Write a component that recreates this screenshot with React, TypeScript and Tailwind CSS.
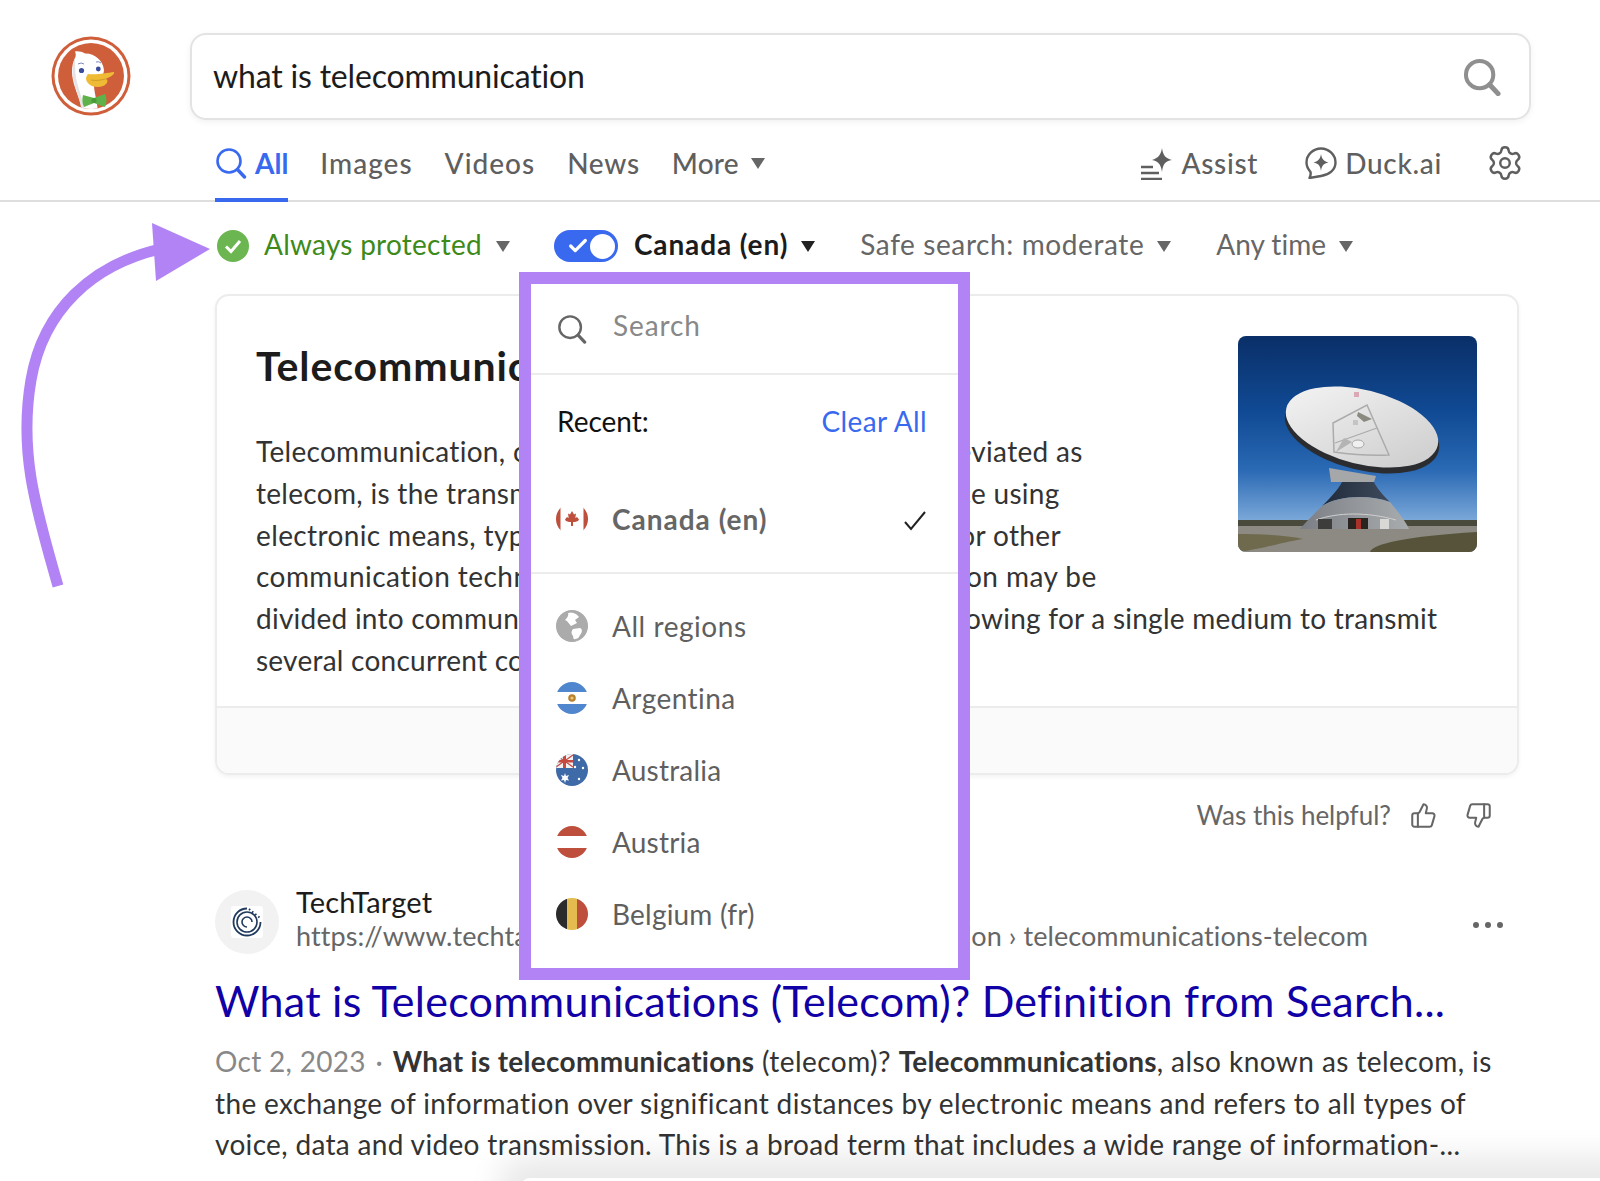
import React from "react";
import { ThumbsUp, ThumbsDown, Settings, Check } from "lucide-react";

const F = "[font-family:Lato,'Liberation_Sans',sans-serif] [font-variant-ligatures:none]";

function Caret({ dark = false, c = "" }: { dark?: boolean; c?: string }) {
  return (
    <svg width="14" height="11" viewBox="0 0 14 11" className={c}>
      <path d="M0 0H14L7 11Z" fill={dark ? "#222" : "#666"} />
    </svg>
  );
}

function Lens({ size, color, sw = 3 }: { size: number; color: string; sw?: number }) {
  return (
    <svg width={size} height={size} viewBox="0 0 32 32" fill="none" stroke={color}>
      <circle cx="14" cy="14" r="11.5" strokeWidth={sw} />
      <path d="M22.5 22.5L29.5 30" strokeWidth={sw + 0.8} strokeLinecap="round" />
    </svg>
  );
}

function Logo() {
  return (
    <svg width="80" height="80" viewBox="0 0 80 80" className="shrink-0 -mt-[1px]">
      <defs>
        <clipPath id="duckc"><circle cx="40" cy="40" r="33" /></clipPath>
      </defs>
      <circle cx="40" cy="40" r="39.5" fill="#cf5f3b" />
      <circle cx="40" cy="40" r="36.5" fill="#fff" />
      <circle cx="40" cy="40" r="33" fill="#cf5f3b" />
      <g clipPath="url(#duckc)">
        <path d="M24 22C25 20 25 18 24 15.5C28 15 31 16 34 17.5C43 17 52 24 53 34C53 42 44 43 43 49C43 56 46 64 47 76H32C30 66 24 54 22 44C20 36 21 28 24 22Z" fill="#fff" />
        <path d="M24 22C21 30 21 38 23 46C25 54 29 64 31 76H34C32 64 27 52 25 42C24 34 24 28 24 22Z" fill="#e4e4e4" />
      </g>
      <path d="M32 59L43 62L54 58C56 62 56 67 54 71L43 67L33 71C31 67 31 63 32 59Z" fill="#5fb24a" />
      <circle cx="43" cy="64.5" r="2.6" fill="#4b9a3a" />
      <path d="M37 38C45 39 56 37 63 36C64 38 60 41 54 43C58 43 57 48 52 50C44 53 36 49 35 43C35 41 36 39 37 38Z" fill="#efbb35" />
      <path d="M40 44C46 45 50 44 54 43" stroke="#c9922a" strokeWidth="0.8" fill="none" />
      <circle cx="30.5" cy="34.5" r="2.6" fill="#3a4a9a" />
      <circle cx="47.3" cy="33" r="2.4" fill="#3a4a9a" />
      <path d="M27 28Q30 26 33 28M45 26Q48 25 50 27" stroke="#7a8ac0" strokeWidth="1" fill="none" />
    </svg>
  );
}

function AssistIcon() {
  return (
    <svg width="33" height="33" viewBox="0 0 33 33" fill="none">
      <path d="M1 20H13M1 26H19M1 32H22" stroke="#5f5f5f" strokeWidth="2.6" />
      <path d="M22 1C23 8 25 11 32 13C25 14 23 17 22 25C21 17 18 14 12 13C18 11 21 8 22 1Z" fill="#5f5f5f" />
    </svg>
  );
}

function DuckAiIcon() {
  return (
    <svg width="32" height="32" viewBox="0 0 32 32" fill="none">
      <path d="M16 1.5C24 1.5 30.5 8 30.5 15.5C30.5 23 24 28 16 29L4.5 31C5.5 29 6 27 5.5 25C3 22 1.5 19 1.5 15.5C1.5 8 8 1.5 16 1.5Z" stroke="#5f5f5f" strokeWidth="2.4" strokeLinejoin="round" />
      <path d="M16 7C16.8 12 18.5 14 23.5 15.5C18.5 16.5 16.8 18.5 16 24C15.2 18.5 13.5 16.5 8.5 15.5C13.5 14 15.2 12 16 7Z" fill="#5f5f5f" />
    </svg>
  );
}

function Flag({ id, children }: { id: string; children: React.ReactNode }) {
  return (
    <svg width="32" height="32" viewBox="0 0 32 32" className="shrink-0">
      <defs>
        <clipPath id={id}><circle cx="16" cy="16" r="16" /></clipPath>
      </defs>
      <g clipPath={`url(#${id})`}>{children}</g>
    </svg>
  );
}

const FCanada = () => (
  <Flag id="ca">
    <rect width="4.5" height="32" fill="#bd4f3c" />
    <rect x="27.5" width="4.5" height="32" fill="#bd4f3c" />
    <path d="M16 8L18 11.5L20 10.5L19.3 15L21 14L23 16.5L22 18L19 19L17 19V23H15V19L13 19L10 18L9 16.5L11 14L12.7 15L12 10.5L14 11.5Z" fill="#bd4f3c" />
  </Flag>
);
const FGlobe = () => (
  <Flag id="gl">
    <rect width="32" height="32" fill="#ababab" />
    <path d="M12 2C17 2 21 4 23 7L19 10L21 13L15 16C13 14 12 11 9 10C11 8 13 6 12 2Z" fill="#fff" />
    <path d="M17 19L24 18C27 19 26 23 24 25L21 31C19 31 17 29 17 26C15 24 15 21 17 19Z" fill="#fff" />
    <circle cx="16" cy="16" r="14.5" fill="none" stroke="#ababab" strokeWidth="2" />
  </Flag>
);
const FArg = () => (
  <Flag id="ar">
    <rect width="32" height="32" fill="#fff" />
    <rect width="32" height="10" fill="#4f86cd" />
    <rect y="22" width="32" height="10" fill="#4f86cd" />
    <circle cx="16" cy="16" r="3.8" fill="#b8802c" />
    <circle cx="16" cy="16" r="1.6" fill="#e6c87a" />
  </Flag>
);
const FAus = () => (
  <Flag id="au">
    <rect width="32" height="32" fill="#3f6aa8" />
    <rect width="17" height="14" fill="#f1f1f4" />
    <path d="M0 6H17V8.5H0ZM7 0H10V14H7Z" fill="#c64a3f" />
    <path d="M0 1L17 13M17 1L0 13" stroke="#c64a3f" strokeWidth="1.2" />
    <path d="M9 19L10 22L13 21L11.5 24L13 26.5L10 26L9 29L8 26L5 26.5L6.5 24L5 21L8 22Z" fill="#fff" />
    <circle cx="23" cy="6" r="1.2" fill="#fff" />
    <circle cx="27" cy="14" r="1.2" fill="#fff" />
    <circle cx="19" cy="13" r="1.2" fill="#fff" />
    <circle cx="23" cy="25" r="1.2" fill="#fff" />
  </Flag>
);
const FAut = () => (
  <Flag id="at">
    <rect width="32" height="32" fill="#fff" />
    <rect width="32" height="10" fill="#bd4f3c" />
    <rect y="22" width="32" height="10" fill="#bd4f3c" />
  </Flag>
);
const FBel = () => (
  <Flag id="be">
    <rect width="11" height="32" fill="#2b2b2b" />
    <rect x="11" width="10" height="32" fill="#e3bb4e" />
    <rect x="21" width="11" height="32" fill="#bd4f3c" />
  </Flag>
);

function Dish() {
  return (
    <svg viewBox="0 0 239 216" className="float-right mr-[40px] w-[239px] h-[216px] rounded-[8px]">
      <defs>
        <linearGradient id="sky" x1="0" y1="0" x2="0" y2="1">
          <stop offset="0" stopColor="#0a2f68" />
          <stop offset="0.35" stopColor="#104a94" />
          <stop offset="0.62" stopColor="#2a69b4" />
          <stop offset="0.85" stopColor="#79a7d8" />
        </linearGradient>
        <linearGradient id="plate" x1="0" y1="0" x2="1" y2="0.6">
          <stop offset="0" stopColor="#f6f6f6" />
          <stop offset="1" stopColor="#d0d0d0" />
        </linearGradient>
        <linearGradient id="neck" x1="0" y1="0" x2="1" y2="0">
          <stop offset="0" stopColor="#1f2a3a" />
          <stop offset="1" stopColor="#3f4a5c" />
        </linearGradient>
        <linearGradient id="skirt" x1="0" y1="0" x2="1" y2="0">
          <stop offset="0" stopColor="#7b7f85" />
          <stop offset="1" stopColor="#a9acae" />
        </linearGradient>
      </defs>
      <rect width="239" height="216" fill="url(#sky)" />
      <rect y="184" width="239" height="8" fill="#4a4a3c" />
      <rect y="190" width="239" height="26" fill="#8c8a82" />
      <path d="M0 216V198C25 198 55 200 65 203C40 207 30 212 0 216Z" fill="#6f6a4d" />
      <path d="M132 216C134 208 170 200 239 196V216Z" fill="#57533a" />
      <path d="M106 142H134C138 152 146 160 152 166C130 158 100 160 84 170C92 162 102 152 106 142Z" fill="url(#neck)" />
      <path d="M84 170C100 160 130 158 152 166C160 176 168 186 171 193H62C68 186 76 178 84 170Z" fill="url(#skirt)" />
      <path d="M78 184C100 176 130 176 158 184" stroke="#d0d0d0" strokeWidth="1" fill="none" />
      <rect x="80" y="183" width="14" height="10" fill="#3d3d3c" />
      <rect x="110" y="182" width="20" height="11" fill="#2a2420" />
      <rect x="118" y="183" width="5" height="10" fill="#a9322a" />
      <rect x="142" y="183" width="9" height="10" fill="#d8d8d4" />
      <path d="M91 132L138 140L136 146L93 146Z" fill="#a5a7a9" />
      <ellipse cx="124" cy="96" rx="79" ry="38" transform="rotate(14 124 96)" fill="#2a2c30" />
      <ellipse cx="124" cy="91" rx="78" ry="37" transform="rotate(14 124 91)" fill="url(#plate)" />
      <path d="M95 87L129 69L151 119C130 120 110 118 96 116Z" fill="none" stroke="#ababab" strokeWidth="1.5" />
      <path d="M97 107L139 92" stroke="#ababab" strokeWidth="1.3" />
      <path d="M120 76L134 83L126 86L119 80Z" fill="#8a8a80" />
      <rect x="115" y="84" width="5" height="5" fill="#c4c4c4" />
      <path d="M98 116L106 102L114 106Z" fill="#b4b4b4" />
      <ellipse cx="120" cy="108" rx="6" ry="4" fill="#f0f0f0" stroke="#a5a5a5" />
      <rect x="116" y="56" width="5" height="5" fill="#d9a8b4" />
    </svg>
  );
}

function Region({ flag, name, t = "tracking-[0.2px]" }: { flag: React.ReactNode; name: string; t?: string }) {
  return (
    <div className={`flex items-center h-[72px] gap-[24px] pl-[25px] text-[#5f5f5f] text-[28px] ${t}`}>
      {flag}
      <span>{name}</span>
    </div>
  );
}

function Popup() {
  return (
    <div className="absolute left-[519px] top-[272px] w-[451px] h-[708px] border-[12px] border-[#b183f5] bg-white">
      <div className="flex items-center h-[91px] border-b-2 border-[#ececec] pl-[26px] gap-[26px]">
        <Lens size={30} color="#666" sw={2.6} />
        <span className="text-[28px] text-[#888] tracking-[0.9px] -mt-[8px]">Search</span>
      </div>
      <div className="flex items-center justify-between h-[94px] pl-[26px] pr-[31px] pb-[2px] text-[28px]">
        <span className="text-[#111]">Recent:</span>
        <span className="text-[#3969ef] tracking-[0.4px]">Clear All</span>
      </div>
      <div className="flex items-center h-[105px] border-b-2 border-[#ececec] pl-[25px] pr-[32px] pb-[4px] gap-[24px]">
        <FCanada />
        <span className="text-[28px] font-bold text-[#666] flex-1 tracking-[1px]">Canada (en)</span>
        <svg width="22" height="20" viewBox="0 0 22 20" fill="none" stroke="#222" strokeWidth="2" className="mt-[4px]"><path d="M1 11L7 18L21 1" /></svg>
      </div>
      <div className="pt-[16px]">
        <Region flag={<FGlobe />} name="All regions" t="tracking-[0.55px]" />
        <Region flag={<FArg />} name="Argentina" t="tracking-[0.45px]" />
        <Region flag={<FAus />} name="Australia" />
        <Region flag={<FAut />} name="Austria" />
        <Region flag={<FBel />} name="Belgium (fr)" />
      </div>
    </div>
  );
}

function Arrow() {
  return (
    <svg width="220" height="380" viewBox="0 0 220 380" className="absolute left-0 top-[215px]" fill="none">
      <path d="M58 371C38 300 18 240 31 165C43 95 92 50 160 34" stroke="#b183f5" strokeWidth="11" />
      <path d="M152 8L210 34L156 66Z" fill="#b183f5" />
    </svg>
  );
}

function TechIcon() {
  return (
    <svg width="32" height="32" viewBox="0 0 32 32" fill="none" stroke="#1f3a5c">
      <rect width="32" height="32" rx="3" fill="#fff" stroke="none" />
      <path d="M16 2.5A13.5 13.5 0 1 0 29.5 16" strokeWidth="1.8" />
      <circle cx="16" cy="16" r="10" strokeWidth="1.6" />
      <path d="M16 21A5 5 0 1 1 21 16" strokeWidth="1.6" />
      <path d="M18 3L29 12" strokeWidth="2" strokeDasharray="1.5 2.5" />
    </svg>
  );
}

export default function App() {
  return (
    <div className={`relative w-[1600px] h-[1181px] overflow-hidden bg-white text-[#333] ${F}`}>
      <header className="flex items-center pl-[51px] pt-[33px]">
        <Logo />
        <div className="ml-[59px] flex items-center justify-between w-[1341px] h-[87px] rounded-[16px] border-2 border-[#e3e3e3] shadow-[0_2px_6px_rgba(0,0,0,0.06)] pl-[21px] pr-[28px]">
          <span className="text-[32px] text-[#1c1c1c] tracking-[-0.18px] -mt-[2px]">what is telecommunication</span>
          <Lens size={38} color="#8f8f8f" sw={3.4} />
        </div>
      </header>

      <nav className="flex items-stretch justify-between h-[82px] border-b-2 border-[#dedede] pl-[215px] pr-[76px] text-[28px] text-[#5f5f5f]">
        <div className="flex items-stretch gap-[32px] -mb-[2px] tracking-[1px] font-medium">
          <div className="flex items-center gap-[8px] border-b-4 border-[#3969ef] pt-[8px] text-[#3969ef] font-bold tracking-normal">
            <Lens size={32} color="#3969ef" sw={2.6} />
            <span>All</span>
          </div>
          <div className="flex items-center pt-[8px] pb-[4px]">Images</div>
          <div className="flex items-center pt-[8px] pb-[4px]">Videos</div>
          <div className="flex items-center pt-[8px] pb-[4px] tracking-[0.7px]">News</div>
          <div className="flex items-center gap-[12px] pt-[8px] pb-[4px] tracking-[0.2px]">More <Caret /></div>
        </div>
        <div className="flex items-center gap-[47px] pt-[8px] pb-[2px] font-medium tracking-[0.7px]">
          <div className="flex items-center gap-[8px]"><AssistIcon /><span>Assist</span></div>
          <div className="flex items-center gap-[8px]"><DuckAiIcon /><span>Duck.ai</span></div>
          <Settings size={38} strokeWidth={1.55} color="#5f5f5f" className="-ml-[3px]" />
        </div>
      </nav>

      <div className="flex items-center h-[32px] mt-[28px] pl-[217px] text-[28px]">
        <svg width="32" height="32" viewBox="0 0 32 32"><circle cx="16" cy="16" r="16" fill="#6cb651" /><path d="M9 16.5L14 21.5L23 11" fill="none" stroke="#fff" strokeWidth="3" /></svg>
        <span className="ml-[15px] text-[#3d8a1a] tracking-[0.25px] -mt-[5px]">Always protected</span>
        <Caret c="ml-[14px]" />
        <div className="ml-[44px] flex items-center w-[64px] h-[32px] rounded-full bg-[#3969ef] px-[3px] justify-between">
          <Check size={22} strokeWidth={3.5} color="#fff" className="ml-[10px]" />
          <span className="w-[25px] h-[25px] rounded-full bg-white" />
        </div>
        <span className="ml-[16px] font-bold text-[#1c1c1c] tracking-[0.9px] -mt-[5px]">Canada (en)</span>
        <Caret dark c="ml-[13px]" />
        <span className="ml-[45px] text-[#666] tracking-[0.6px] -mt-[5px]">Safe search: moderate</span>
        <Caret c="ml-[13px]" />
        <span className="ml-[45px] text-[#666] -mt-[5px]">Any time</span>
        <Caret c="ml-[13px]" />
      </div>

      <section className="ml-[215px] mt-[32px] w-[1304px] h-[481px] rounded-[14px] border-2 border-[#ececec] shadow-[0_2px_4px_rgba(0,0,0,0.05)] overflow-hidden flex flex-col">
        <div className="flex-1 pt-[40px] pl-[39px]">
          <Dish />
          <h2 className="mt-[6px] text-[41px] leading-[48px] font-bold text-[#1c1c1c] tracking-[0.9px]">Telecommunication</h2>
          <div className="mt-[41px] text-[28px] leading-[41.8px] text-[#333] whitespace-nowrap tracking-[0.25px]">
            <div className="tracking-[0.3px]">Telecommunication, often used in its plural form or abbreviated as</div>
            <div className="tracking-[0.3px]">telecom, is the transmission of information over a distance using</div>
            <div className="tracking-[0.37px]">electronic means, typically through cables, radio waves, or other</div>
            <div className="tracking-[0.45px]">communication technologies. These means of transmission may be</div>
            <div>divided into communication channels for multiplexing, allowing for a single medium to transmit</div>
            <div>several concurrent communication sessions.</div>
          </div>
        </div>
        <div className="h-[67px] border-t-2 border-[#ececec] bg-[#fafafa]" />
      </section>

      <div className="flex items-center justify-end h-[38px] mt-[21px] pr-[108px] text-[26px] text-[#666]">
        <span>Was this helpful?</span>
        <ThumbsUp size={27} strokeWidth={1.8} className="ml-[19px]" />
        <ThumbsDown size={27} strokeWidth={1.8} className="ml-[28px]" />
      </div>

      <article className="relative ml-[215px] mt-[56px] w-[1288px]">
        <div className="flex">
          <div className="flex items-center justify-center w-[64px] h-[64px] rounded-full bg-[#f2f2f2]"><TechIcon /></div>
          <div className="ml-[17px] flex-1 flex flex-col">
            <span className="text-[29px] leading-[34px] text-[#1c1c1c] -mt-[5px] tracking-[0.2px]">TechTarget</span>
            <span className="text-[27px] leading-[34px] text-[#666] tracking-[0.08px]">https://www.techtarget.com › searchnetworking › definition › telecommunications-telecom</span>
          </div>
          <div className="flex gap-[6px] items-center mt-[32px] h-[6px]">
            <span className="w-[6px] h-[6px] rounded-full bg-[#666]" />
            <span className="w-[6px] h-[6px] rounded-full bg-[#666]" />
            <span className="w-[6px] h-[6px] rounded-full bg-[#666]" />
          </div>
        </div>
        <h3 className="mt-[22px] text-[43px] leading-[50px] text-[#1100a5] whitespace-nowrap tracking-[0.25px]">What is Telecommunications (Telecom)? Definition from Search...</h3>
        <div className="mt-[15px] text-[28px] leading-[41.5px] text-[#333] whitespace-nowrap">
          <div className="tracking-[0.44px]"><span className="text-[#888] tracking-[0.3px]">Oct 2, 2023</span><span className="text-[#888] pl-[2px] pr-[2px]"> · </span><b className="tracking-[0.3px]">What is telecommunications</b> (telecom)? <b className="tracking-[0.2px]">Telecommunications</b>, also known as telecom, is</div>
          <div className="tracking-[0.36px]">the exchange of information over significant distances by electronic means and refers to all types of</div>
          <div className="tracking-[0.33px]">voice, data and video transmission. This is a broad term that includes a wide range of information-...</div>
        </div>
      </article>

      <Arrow />
      <Popup />
      <div className="absolute left-[520px] right-[-40px] top-[1178px] h-[20px] rounded-[20px] shadow-[0_0_32px_22px_rgba(0,0,0,0.09)]" />
    </div>
  );
}
